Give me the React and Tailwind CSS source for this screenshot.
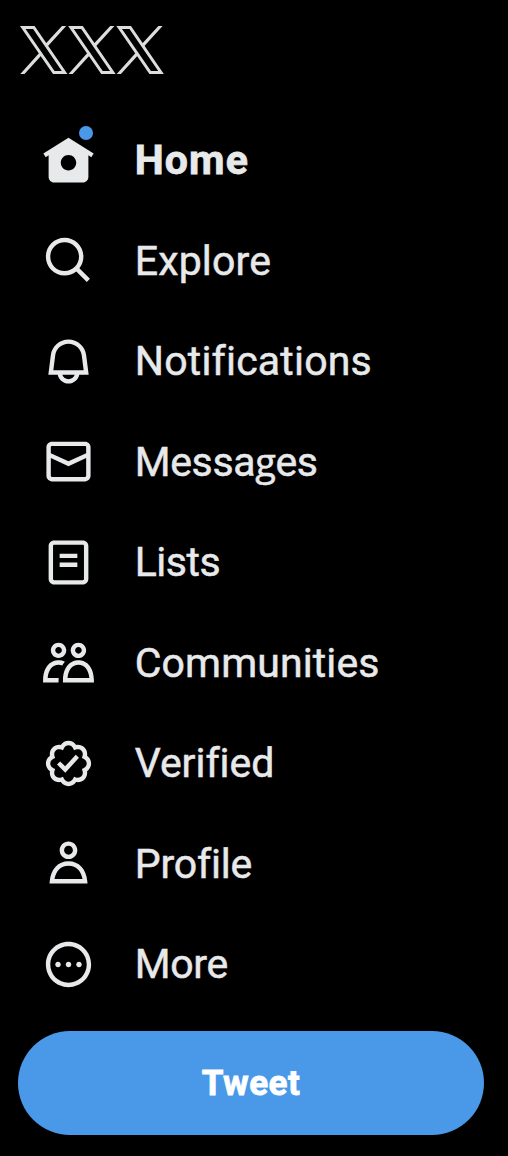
const icons = {
  home: "M12 1.696L.622 8.807l1.06 1.696L3 9.679V19.5C3 20.881 4.119 22 5.5 22h13c1.381 0 2.5-1.119 2.5-2.5V9.679l1.318.824 1.06-1.696L12 1.696zM12 16.5c-1.933 0-3.5-1.567-3.5-3.5s1.567-3.5 3.5-3.5 3.5 1.567 3.5 3.5-1.567 3.5-3.5 3.5z",
  explore: "M10.25 3.75c-3.59 0-6.5 2.91-6.5 6.5s2.91 6.5 6.5 6.5c1.795 0 3.419-.726 4.596-1.904 1.178-1.177 1.904-2.801 1.904-4.596 0-3.59-2.91-6.5-6.5-6.5zm-8.5 6.5c0-4.694 3.806-8.5 8.5-8.5s8.5 3.806 8.5 8.5c0 1.986-.682 3.815-1.824 5.262l4.781 4.781-1.414 1.414-4.781-4.781c-1.447 1.142-3.276 1.824-5.262 1.824-4.694 0-8.5-3.806-8.5-8.5z",
  notifications: "M19.993 9.042C19.48 5.017 16.054 2 11.996 2s-7.49 3.021-7.999 7.051L2.866 18H7.1c.463 2.282 2.481 4 4.9 4s4.437-1.718 4.9-4h4.236l-1.143-8.958zM12 20c-1.306 0-2.417-.835-2.829-2h5.658c-.412 1.165-1.523 2-2.829 2zm-6.866-4l.847-6.698C6.364 6.272 8.941 4 11.996 4s5.627 2.268 6.013 5.295L18.864 16H5.134z",
  messages: "M1.998 5.5c0-1.381 1.119-2.5 2.5-2.5h15c1.381 0 2.5 1.119 2.5 2.5v13c0 1.381-1.119 2.5-2.5 2.5h-15c-1.381 0-2.5-1.119-2.5-2.5v-13zm2.5-.5c-.276 0-.5.224-.5.5v2.764l8 3.638 8-3.636V5.5c0-.276-.224-.5-.5-.5h-15zm15.5 5.463l-8 3.636-8-3.638V18.5c0 .276.224.5.5.5h15c.276 0 .5-.224.5-.5v-8.037z",
  lists: "M3 4.5C3 3.12 4.12 2 5.5 2h13C19.88 2 21 3.12 21 4.5v15c0 1.38-1.12 2.5-2.5 2.5h-13C4.12 22 3 20.88 3 19.5v-15zM5.5 4c-.28 0-.5.22-.5.5v15c0 .28.22.5.5.5h13c.28 0 .5-.22.5-.5v-15c0-.28-.22-.5-.5-.5h-13zM16 10H8V8h8v2zm-8 2h8v2H8v-2z",
  communities: "M7.501 19.917L7.471 21H.472l.029-1.027c.184-6.618 3.736-8.977 7-8.977.963 0 1.95.212 2.87.672-.444.478-.851 1.03-1.212 1.656-.507-.204-1.054-.329-1.658-.329-2.767 0-4.57 2.223-4.938 6.004H7.56c-.023.302-.05.599-.059.918zm15.998.056L23.528 21H9.472l.029-1.027c.184-6.618 3.736-8.977 7-8.977s6.816 2.358 7 8.977zM21.437 19c-.367-3.781-2.17-6.004-4.938-6.004s-4.57 2.223-4.938 6.004h9.875zm-4.938-9c-.799 0-1.527-.279-2.116-.73-.836-.64-1.384-1.638-1.384-2.77 0-1.93 1.567-3.5 3.5-3.5s3.5 1.57 3.5 3.5c0 1.132-.548 2.13-1.384 2.77-.589.451-1.317.73-2.116.73zm-1.5-3.5c0 .827.673 1.5 1.5 1.5s1.5-.673 1.5-1.5-.673-1.5-1.5-1.5-1.5.673-1.5 1.5zM7.5 3C9.433 3 11 4.57 11 6.5S9.433 10 7.5 10 4 8.43 4 6.5 5.567 3 7.5 3zm0 2C6.673 5 6 5.673 6 6.5S6.673 8 7.5 8 9 7.327 9 6.5 8.327 5 7.5 5z",
  verified: "M8.52 3.59c.8-1.1 2.04-1.84 3.48-1.84s2.68.74 3.49 1.84c1.34-.21 2.74.14 3.76 1.16s1.37 2.42 1.16 3.77c1.1.8 1.84 2.04 1.84 3.48s-.74 2.68-1.84 3.48c.21 1.34-.14 2.75-1.16 3.77s-2.42 1.37-3.76 1.16c-.8 1.1-2.05 1.84-3.49 1.84s-2.68-.74-3.48-1.84c-1.34.21-2.75-.14-3.77-1.16-1.01-1.02-1.37-2.42-1.16-3.77-1.09-.8-1.84-2.04-1.84-3.48s.75-2.68 1.84-3.48c-.21-1.35.14-2.75 1.16-3.77s2.43-1.37 3.77-1.16zm3.48.16c-.85 0-1.66.53-2.12 1.43l-.38.77-.82-.27c-.96-.32-1.91-.12-2.51.49-.6.6-.8 1.54-.49 2.51l.27.81-.77.39c-.9.46-1.43 1.27-1.43 2.12s.53 1.66 1.43 2.12l.77.39-.27.81c-.31.97-.11 1.91.49 2.51.6.61 1.55.81 2.51.49l.82-.27.38.77c.46.9 1.27 1.43 2.12 1.43s1.66-.53 2.12-1.43l.39-.77.82.27c.96.32 1.9.12 2.51-.49.6-.6.8-1.55.48-2.51l-.26-.81.76-.39c.91-.46 1.43-1.27 1.43-2.12s-.52-1.66-1.43-2.12l-.77-.39.27-.81c.32-.97.12-1.91-.48-2.51-.61-.61-1.55-.81-2.51-.49l-.82.27-.39-.77c-.46-.9-1.27-1.43-2.12-1.43zm4.74 5.68l-6.2 6.77-3.74-3.74 1.41-1.42 2.26 2.26 4.8-5.23 1.47 1.36z",
  profile: "M5.651 19h12.698c-.337-1.8-1.023-3.21-1.945-4.19C15.318 13.65 13.838 13 12 13s-3.317.65-4.404 1.81c-.922.98-1.608 2.39-1.945 4.19zm.486-5.56C7.627 11.85 9.648 11 12 11s4.373.85 5.863 2.44c1.477 1.58 2.366 3.8 2.632 6.46l.11 1.1H3.395l.11-1.1c.266-2.66 1.155-4.88 2.632-6.46zM12 4c-1.105 0-2 .9-2 2s.895 2 2 2 2-.9 2-2-.895-2-2-2zM8 6c0-2.21 1.791-4 4-4s4 1.79 4 4-1.791 4-4 4-4-1.79-4-4z",
  more: "M3.75 12c0-4.56 3.69-8.25 8.25-8.25s8.25 3.69 8.25 8.25-3.69 8.25-8.25 8.25S3.75 16.56 3.75 12zM12 1.75C6.34 1.75 1.75 6.34 1.75 12S6.34 22.25 12 22.25 22.25 17.66 22.25 12 17.66 1.75 12 1.75zm-4.75 11.5c.69 0 1.25-.56 1.25-1.25s-.56-1.25-1.25-1.25S6 11.31 6 12s.56 1.25 1.25 1.25zm9.5 0c.69 0 1.25-.56 1.25-1.25s-.56-1.25-1.25-1.25-1.25.56-1.25 1.25.56 1.25 1.25 1.25zM13.25 12c0 .69-.56 1.25-1.25 1.25s-1.25-.56-1.25-1.25.56-1.25 1.25-1.25 1.25.56 1.25 1.25z",
};

const regular = "[-webkit-text-stroke:0.5px_#e7e9ea]";

const items = [
  { icon: "home", label: "Home", text: "font-bold tracking-[1.1px] [-webkit-text-stroke:0.8px_#e7e9ea]", badge: true },
  { icon: "explore", label: "Explore", text: `${regular} tracking-[0.15px]` },
  { icon: "notifications", label: "Notifications", text: `${regular} tracking-[0.2px]` },
  {
    icon: "messages",
    label: <>Messa<span className="font-['Open_Sans',sans-serif] text-[38px]">g</span>es</>,
    text: `${regular} tracking-[-0.35px]`,
  },
  { icon: "lists", label: "Lists", text: `${regular} tracking-[-0.5px]` },
  { icon: "communities", label: "Communities", text: `${regular} tracking-[0.12px]` },
  { icon: "verified", label: "Verified", text: `${regular} tracking-[-0.05px]` },
  { icon: "profile", label: "Profile", text: `${regular} tracking-[-0.2px]` },
  { icon: "more", label: "More", text: `${regular} tracking-[-0.3px]` },
];

function Logo() {
  return (
    <svg className="ml-5 h-12 w-36 overflow-visible text-[#dcdddd]" viewBox="0 0 144 48" aria-hidden="true">
      {[0, 48.2, 96.4].map((x) => (
        <g key={x} transform={`translate(${x} 0)`}>
          <path d="M2.8 1.5H13.8L44.6 46.5H33.8Z" fill="none" stroke="currentColor" strokeWidth="3" />
          <path d="M42 0H46.2L27.6 20.6L25.6 17.8ZM.3 48H4.5L22.5 28.2L20.5 25.4Z" fill="currentColor" />
        </g>
      ))}
    </svg>
  );
}

function NavItem({ item }) {
  return (
    <a className="flex h-[100.5px] items-center">
      <span className="relative mr-[39.5px] size-[53px] shrink-0">
        <svg className="size-full" viewBox="0 0 24 24" fill="currentColor" aria-hidden="true">
          <path d={icons[item.icon]} />
        </svg>
        {item.badge && <span className="absolute -top-[8px] left-[36.75px] size-3.5 rounded-full bg-[#4a99e9]" />}
      </span>
      <span className={`text-[41px] leading-[52px] [font-variant-ligatures:none] ${item.text}`}>{item.label}</span>
    </a>
  );
}

export default function App() {
  return (
    <div className="flex h-[1156px] w-[508px] flex-col overflow-hidden bg-black pt-[26px] font-[Roboto,sans-serif] text-[#e7e9ea]">
      <Logo />
      <nav className="mt-[36px] flex flex-col pl-[42.25px]">
        {items.map((item) => (
          <NavItem key={item.icon} item={item} />
        ))}
      </nav>
      <button className="mt-[16.5px] ml-[18px] h-[104px] w-[466px] rounded-full bg-[#4a99e9] pt-[2px] text-[35px] font-bold tracking-[0.5px] text-white [-webkit-text-stroke:0.8px_white]">
        Tweet
      </button>
    </div>
  );
}
